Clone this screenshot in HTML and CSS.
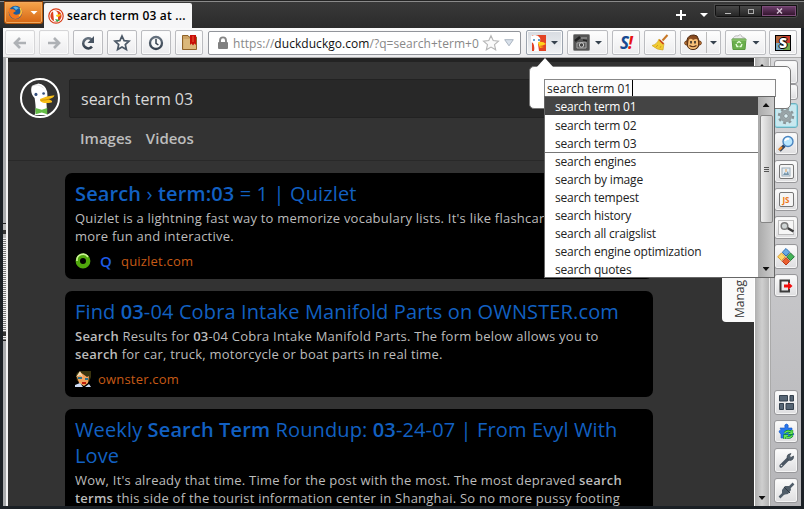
FILE: index.html
```html
<!DOCTYPE html>
<html lang="en">
<head>
<meta charset="utf-8">
<title>search term 03 at DuckDuckGo</title>
<link rel="stylesheet" href="styles.css">
</head>
<body>
<svg width="0" height="0" class="defs">
  <defs>
    <linearGradient id="steel" x1="0" y1="0" x2="0" y2="1"><stop offset="0" stop-color="#65717e"/><stop offset="1" stop-color="#36414e"/></linearGradient>
    <symbol id="duck" viewBox="0 0 40 40">
      <path d="M14 39C16 34 15 27 14 20C9 15 10 9 11 7L18 4Q26 5 28 13Q29 17 27 22L28 39Z" fill="#fff"/>
      <path d="M11 7Q17 3 24 9" fill="none" stroke="#ddd"/>
      <circle cx="15.500" cy="16" r="1.700" fill="#35507e"/><circle cx="24" cy="15" r="1.500" fill="#35507e"/>
      <path d="M20 21Q27 18 36 17Q36 20 29 21.500Q35 23 33 25Q23 27 20 23Z" fill="#f7be16"/>
      <path d="M21 22.500Q27 22.500 31 21" fill="none" stroke="#c68b10"/>
      <path d="M15 31L22 33L28 31V38L22 36L15 38Z" fill="#65bd47"/>
    </symbol>
  </defs>
</svg>
<div class="window">
  <header class="titlebar">
    <div class="fx">
      <svg width="15" height="15" viewBox="0 0 15 15"><circle cx="7.5" cy="7.5" r="6.7" fill="#1c5c9e"/><path d="M5 2Q8 .5 11 3L8 5Z" fill="#58b5e8"/><path d="M1 3Q3 5 5 4L8 6L5 8Q7 11 11 9Q14 7 12 2Q16 8 12 12Q7 16 3 12Q0 9 1 3Z" fill="#f5761d"/><path d="M12 3Q15 8 11 11" fill="none" stroke="#ffd040" stroke-width="1.3"/></svg>
      <i class="tri white"></i>
    </div>
    <div class="tab">
      <svg width="16" height="16" viewBox="0 0 16 16"><circle cx="8" cy="8" r="7.2" fill="#fff" stroke="#d83b16" stroke-width="1.2"/><circle cx="8" cy="8" r="5.6" fill="#de4220"/><path d="M5 3Q9 2 10 6V13H6Z" fill="#fff"/><path d="M8 7Q11 6 13 6Q13 8 10 9Q8 9 8 7" fill="#fcc512"/><path d="M7 11L12 12L9 14Z" fill="#35aa48"/></svg>
      <span>search term 03 at ...</span>
    </div>
    <div class="tabtools"><i class="plus"></i><i class="tri white"></i></div>
    <div class="winbtns"><span class="wb min"><i></i></span><span class="wb max"><i></i></span><span class="wb close"><svg width="7" height="6" viewBox="0 0 7 6"><path d="M1 .5L6 5.5M6 .5L1 5.5" stroke="#d8c5d6" stroke-width="1.4"/></svg></span></div>
  </header>

  <nav class="toolbar">
    <div class="btn w30 dim"><svg width="14" height="14" viewBox="0 0 14 14"><path d="M7 2L2 7L7 12M2.5 7H13" fill="none" stroke="#aeb1b5" stroke-width="2.7"/></svg></div>
    <div class="btn w30 dim"><svg width="14" height="14" viewBox="0 0 14 14"><path d="M7 2L12 7L7 12M11.5 7H1" fill="none" stroke="#aeb1b5" stroke-width="2.7"/></svg></div>
    <div class="btn w30"><svg width="16" height="16" viewBox="0 0 16 16"><path d="M12 11.700A5 5 0 1 1 11.500 4.500" fill="none" stroke="url(#steel)" stroke-width="2.7"/><path d="M14 1V8H7.5Z" fill="#485563"/></svg></div>
    <div class="btn w30"><svg width="18" height="18" viewBox="0 0 18 18"><path d="M9 2L11.1 6.7L16 7.2L12.3 10.5L13.4 15.5L9 12.9L4.6 15.5L5.7 10.5L2 7.2L6.9 6.7Z" fill="#f8f8f8" stroke="#4b5866" stroke-width="1.7"/></svg></div>
    <div class="btn w30"><svg width="16" height="16" viewBox="0 0 16 16"><circle cx="8" cy="8" r="6" fill="#f8f8f8" stroke="url(#steel)" stroke-width="2.3"/><path d="M8 4V8.3L10.4 10" fill="none" stroke="#36414e" stroke-width="1.5"/></svg></div>
    <div class="btn w28 gap5"><svg width="17" height="17" viewBox="0 0 17 17"><path d="M1.5 1.5H7L8 3H15.5V15.5H1.5Z" fill="#cda365" stroke="#8f6229"/><path d="M2.5 5H15V15H2.5Z" fill="#dbb87b"/><path d="M9 1H15V11L13.5 9.5L12 11.5L10.5 9.5L9 11Z" fill="#c80e08"/><path d="M12 2V8" stroke="#ee5c38"/></svg></div>
    <div class="url">
      <svg width="12" height="14" viewBox="0 0 12 14"><path d="M3 7V4.5Q3 1.4 6 1.4T9 4.5V7" fill="none" stroke="#858585" stroke-width="1.9"/><rect x="1" y="6" width="10" height="7" rx="1" fill="#808080"/></svg>
      <span class="addr">https://<b>duckduckgo.com</b>/?q=search+term+0</span>
      <svg class="fav" width="18" height="18" viewBox="0 0 18 18"><path d="M9 1.7L11.2 6.6L16.5 7.1L12.5 10.6L13.7 15.8L9 13.1L4.3 15.8L5.5 10.6L1.5 7.1L6.8 6.6Z" fill="#fafafa" stroke="#b5b5b5" stroke-width="1.1"/></svg>
      <svg width="10" height="8" viewBox="0 0 10 8"><path d="M.7 .7H9.3L5 6.8Z" fill="#d8e0ea" stroke="#aab4c0"/></svg>
    </div>
    <div class="btn w37 active"><svg width="16" height="18" viewBox="0 0 16 18"><rect x="1" y="1" width="14" height="16" fill="#e34324"/><path d="M0 2Q6-1 9 4Q10 8 7 10L8 17H3Q4 12 2 9L0 8Z" fill="#fff"/><path d="M7 8Q12 7 15 10Q12 12 8 12Z" fill="#ffd21c"/><path d="M8 12L13 13L9 14Z" fill="#ffb90b"/><circle cx="3" cy="6" r="1" fill="#3584bd"/><circle cx="8" cy="6" r="1" fill="#3584bd"/></svg><i class="tri"></i></div>
    <div class="btn w41"><svg width="17" height="17" viewBox="0 0 17 17"><rect x=".5" y=".5" width="16" height="16" rx="1" fill="#555" stroke="#858585"/><path d="M2 7L7 3" stroke="#222" stroke-width="2.500"/><path d="M8 4H14M4 9V14H13V8Z" fill="none" stroke="#aaa"/><circle cx="8.500" cy="11" r="2.200" fill="#444" stroke="#ccc"/><path d="M10 6L14 7" stroke="#222" stroke-width="1.500"/></svg><i class="tri"></i></div>
    <div class="btn w28"><span class="s-one">S<em>!</em></span></div>
    <div class="btn w32"><svg width="18" height="18" viewBox="0 0 18 18"><path d="M16.500 1L11.500 6.500" stroke="#c87828" stroke-width="2"/><path d="M8 5L13 9.500L12 16Q6 16 1 11.500Q6 10.500 8 5Z" fill="#f0cb31" stroke="#d0a526" stroke-width=".7"/><path d="M8.500 6L12.500 10" stroke="#c43a22" stroke-width="1.500"/><path d="M7 11L5 13M10 12L9 14" stroke="#d39b22"/></svg></div>
    <div class="btn w41 split"><svg width="18" height="17" viewBox="0 0 18 17"><circle cx="2.7" cy="9" r="2" fill="#d98b46" stroke="#693813"/><circle cx="15.3" cy="9" r="2" fill="#d98b46" stroke="#693813"/><path d="M3 6Q4 1 10 1L13 2Q15 5 15 9Q15 15.5 9 15.5T3 9Z" fill="#8b4c20" stroke="#4b270d"/><path d="M4.500 7Q5 4 8 5L9 6Q14 3 14 8L14 11Q13 15 9 15Q4 15 4 11Z" fill="#f6bf78"/><path d="M7 7V9.500M11 7V9.500" stroke="#222" stroke-width="1.500"/><path d="M5.500 11.500Q9 14 12.500 11.500" fill="none" stroke="#5c3016" stroke-width="1.2"/></svg><i class="tri"></i></div>
    <div class="btn w41 bag"><svg width="16" height="17" viewBox="0 0 16 17"><path d="M2 5Q3 1 7 2Q10-1 11 3Q14 3 14 5Z" fill="#eee" stroke="#bbb"/><path d="M1 5H15L14 15.5H2Z" fill="#6aaf4c" stroke="#5a9a40"/><path d="M1 6H15" stroke="#9ace7c"/><path d="M6 9L8 7.500L10 9M11 10L10 12.500H8.500M5 10L6 12.500H7.500" fill="none" stroke="#e9ffdf" stroke-width="1.4"/></svg><i class="tri"></i></div>
    <div class="btn w28 last"><span class="s-box">S</span></div>
  </nav>

  <div class="body">
    <div class="rail"><i class="grip"></i></div>
    <main class="page">
      <div class="head">
        <div class="logo"><svg width="36" height="36"><use href="#duck"/></svg></div>
        <div class="query">search term 03</div>
      </div>
      <div class="verticals"><span>Images</span><span>Videos</span></div>
      <section class="results">
        <article class="r1">
          <h2><b>Search</b> › <b>term:03</b> = 1 | Quizlet</h2>
          <p class="ln">Quizlet is a lightning fast way to memorize vocabulary lists. It's like flashcards,</p>
          <p class="ln">more fun and interactive.</p>
          <div class="src"><svg width="16" height="16" viewBox="0 0 16 16"><circle cx="8" cy="8" r="5.2" fill="none" stroke="#50a80c" stroke-width="4.4"/><path d="M2 8A6 6 0 0 1 13 4" fill="none" stroke="#caf493" stroke-width="1.6"/></svg><strong>Q</strong><span>quizlet.com</span></div>
        </article>
        <article class="r2">
          <h2>Find <b>03</b>-04 Cobra Intake Manifold Parts on OWNSTER.com</h2>
          <p class="ln"><b>Search</b> Results for <b>03</b>-04 Cobra Intake Manifold Parts. The form below allows you to</p>
          <p class="ln"><b>search</b> for car, truck, motorcycle or boat parts in real time.</p>
          <div class="src own"><svg width="16" height="16" viewBox="0 0 16 16"><path d="M1 5Q1 0 8 0H16V6L14 11L2 10Z" fill="#39340e"/><path d="M2 6L5 1L12 6L14 5L13 12L9 15L4 12Z" fill="#f2a35e"/><path d="M1 6L5 0L8 6L5 4Z" fill="#f5deb5"/><path d="M3 7H7M10 8H13" stroke="#2a718c" stroke-width="2"/><path d="M7 12H11" stroke="#c01d0b" stroke-width="2"/><path d="M0 16V14L5 12L8 16ZM10 16L14 13L16 16" fill="#cfddf5"/></svg><span>ownster.com</span></div>
        </article>
        <article class="r3">
          <h2>Weekly <b>Search Term</b> Roundup: <b>03</b>-24-07 | From Evyl With<br>Love</h2>
          <p class="ln">Wow, It's already that time. Time for the post with the most. The most depraved <b>search</b></p>
          <p class="ln"><b>terms</b> this side of the tourist information center in Shanghai. So no more pussy footing</p>
        </article>
      </section>
      <div class="manage"><span>Manag</span></div>
    </main>
    <div class="pagebar"><span class="arr up"></span><span class="arr down"></span></div>
    <aside class="side">
      <div class="sb h24"></div>
      <div class="sb h16"></div>
      <div class="sb gear"><svg width="18" height="18" viewBox="0 0 18 18"><circle cx="9" cy="9" r="7" fill="none" stroke="#8a9598" stroke-width="2.4" stroke-dasharray="2.8 2.7"/><circle cx="9" cy="9" r="4.7" fill="#aab5b8" stroke="#97a2a5" stroke-width="3"/><circle cx="9" cy="9" r="2.300" fill="#dceff3" stroke="#7d888b"/></svg></div>
      <div class="sb h23 m4"><svg width="18" height="18" viewBox="0 0 18 18"><path d="M2.500 15.500L7.500 10.500" stroke="#34465f" stroke-width="3.400"/><path d="M2 15L5 12" stroke="#ef8b2a" stroke-width="2.4"/><circle cx="11" cy="6.5" r="5" fill="#b9e7ff" stroke="#4a84c0" stroke-width="1.4"/><path d="M8 6Q9 3 12 4" fill="none" stroke="#fff" stroke-width="2"/></svg></div>
      <div class="sb h23 m5"><i class="tile"><svg width="10" height="10" viewBox="0 0 10 10"><rect x="1" y="1" width="8" height="8" fill="#e3edf4" stroke="#9cacb8"/><path d="M2 8L4 5L5 7L7 4L8 8Z" fill="#7594aa"/><path d="M5 2V5" stroke="#e59b48"/></svg></i></div>
      <div class="sb h23 m5"><i class="tile js">JS</i></div>
      <div class="sb h23 m5"><svg width="18" height="17" viewBox="0 0 18 17"><rect x="1.500" y="1.500" width="15" height="14" fill="#f6f6f6" stroke="#888" stroke-dasharray="1 1"/><path d="M10.500 9L16.500 12.500" stroke="#3b3b3b" stroke-width="2.6"/><circle cx="7.500" cy="7" r="3.300" fill="#cfd5d5" stroke="#7a7a7a" stroke-width="1.5"/></svg></div>
      <div class="sb h25 m5"><svg width="18" height="18" viewBox="0 0 18 18"><path d="M9 .5L12.700 4.200L9 8L5.300 4.200Z" fill="#6aabe4" stroke="#2f6cae"/><path d="M13.500 5L17.300 8.800L13.500 12.600L9.700 8.800Z" fill="#43b457" stroke="#247237"/><path d="M9 9.600L12.700 13.300L9 17L5.300 13.300Z" fill="#ea6030" stroke="#b93717"/><path d="M4.500 5L8.300 8.800L4.500 12.600L.7 8.800Z" fill="#ffd66a" stroke="#d89a2a"/></svg></div>
      <div class="sb h23 m6"><svg width="14" height="14" viewBox="0 0 14 14"><path d="M10 4V1.5H1.5V12.5H10V10" fill="none" stroke="#3c3c3c" stroke-width="2"/><path d="M5 5.5H9V3L13.5 7L9 11V8.5H5Z" fill="#f20b0b"/></svg></div>
      <div class="sb h25 first-low"><svg width="15" height="15" viewBox="0 0 15 15"><path d="M.5 .5H8.5V6H.5ZM11 .5H14.5V6H11ZM.5 8.5H4.5V14.5H.5ZM7 8.5H14.5V14.5H7Z" fill="#566574" stroke="#35414d"/></svg></div>
      <div class="sb h23 m5"><svg width="17" height="17" viewBox="0 0 17 17"><path d="M2 5H7Q6 1 8.500 1Q11 1 10 5H14V9L16 11L13 15H3V11Q1 10 1 8L3 7Z" fill="#2876ed" stroke="#1555bd" stroke-width=".6"/><path d="M6.500 10Q10 6.500 13.500 9.500M14 7V10.500H10.500M14.500 12.500Q10 16.500 7 13M6.500 16V12.500H10" fill="none" stroke="#128a22" stroke-width="2.400"/><path d="M6.500 10Q10 6.500 13.500 9.500M14 7V10.500H10.500M14.500 12.500Q10 16.500 7 13M6.500 16V12.500H10" fill="none" stroke="#6be45a" stroke-width="1.200"/></svg></div>
      <div class="sb h25 m5"><svg width="17" height="17" viewBox="0 0 17 17"><path d="M3 14L10 7" stroke="#4b5663" stroke-width="3.3" stroke-linecap="round"/><path d="M15.500 4Q16 8 12 8.500Q9 8 9 5Q9 2 13 1.500L11.500 4L13 5.500Z" fill="#53606c" stroke="#3d4751" stroke-width=".7"/><circle cx="3.500" cy="13.500" r=".8" fill="#ddd"/></svg></div>
      <div class="sb h25 m5"><svg width="17" height="17" viewBox="0 0 17 17"><path d="M1.500 15.500L15.500 1.500" stroke="#505d69" stroke-width="2.5"/><path d="M4 8L7 4L12 4L13 8L10 12L4 13Z" fill="#505d69"/><path d="M6 5L12 11" stroke="#2f3943"/></svg></div>
    </aside>
  </div>
</div>

<div class="panel">
  <i class="notch"></i>
  <div class="field">search term 01<i class="caret"></i></div>
</div>
<div class="menu">
  <ul>
    <li class="sel">search term 01</li>
    <li class="past">search term 02</li>
    <li class="past rule">search term 03</li>
    <li>search engines</li>
    <li>search by image</li>
    <li>search tempest</li>
    <li>search history</li>
    <li>search all craigslist</li>
    <li>search engine optimization</li>
    <li>search quotes</li>
  </ul>
  <div class="menubar"><span class="arr up"></span><span class="thumb"><i></i></span><span class="arr down"></span></div>
</div>
</body>
</html>
```
FILE: styles.css
```css
* { box-sizing: border-box; }
body { margin: 0; width: 804px; height: 509px; overflow: hidden; background: #16191d; font-family: "Open Sans", sans-serif; }
svg { display: block; flex: none; }
.defs { position: absolute; }
i, em { font-style: normal; }
b { font-weight: 600; }
.window { width: 804px; height: 509px; display: flex; flex-direction: column; border-radius: 4px 4px 0 0; background: #1b2025; }

.titlebar { height: 28px; flex: none; display: flex; padding-left: 4px; background: linear-gradient(#242424 0 1px, #8a8a8a 1px 2px, #393939 2px, #2b2b2b); }
.fx { width: 39px; height: 23px; margin-top: 1px; border: 1px solid #b4570b; border-top-color: #6b3714; border-radius: 0 0 3px 3px; background: linear-gradient(#f6a54c, #d66613); display: flex; align-items: center; gap: 7px; padding-left: 3px; box-shadow: inset 0 0 0 1px #f0a85e; }
.tri { display: block; width: 8px; height: 4px; background: #36424e; clip-path: polygon(0 0, 100% 0, 50% 100%); flex: none; }
.tri.white { background: #fff; }
.tab { width: 148px; height: 25px; margin: 3px 0 0 1px; background: #f6f6f7; border-radius: 2px 2px 0 0; display: flex; align-items: center; gap: 3px; padding-left: 4px; font-size: 12px; font-weight: 600; letter-spacing: .2px; white-space: nowrap; color: #000; }
.tabtools { display: flex; align-items: center; gap: 14px; margin-left: 484px; padding-top: 2px; height: 28px; }
.plus { width: 10px; height: 10px; background: linear-gradient(#fff, #fff) center / 10px 2px no-repeat, linear-gradient(#fff, #fff) center / 2px 10px no-repeat; }
.winbtns { display: flex; height: 12px; margin: 5px 0 0 7px; border: 1px solid #111; border-radius: 0 0 3px 3px; box-shadow: 0 0 0 1px #4a4a4a; }
.wb { width: 24px; display: flex; align-items: center; justify-content: center; background: linear-gradient(#494949, #262626); border-right: 1px solid #111; }
.wb.max { width: 22px; }
.wb.close { width: 34px; background: linear-gradient(#6a3d69, #35162f); border: 1px solid #7d4d7a; }
.wb.min i { width: 6px; height: 1px; margin-top: 4px; background: #bbb; }
.wb.max i { width: 6px; height: 5px; border: 1px solid #aaa; }

.toolbar { height: 30px; flex: none; display: flex; gap: 4px; margin: 0 3px; padding: 2px 0 0 2px; background: linear-gradient(#fafafa, #ececee); border-bottom: 1px solid #aaa; }
.btn { height: 25px; flex: none; display: flex; align-items: center; justify-content: center; gap: 5px; border: 1px solid #bbbcc0; border-radius: 2px; background: linear-gradient(#fefefe, #ececee); box-shadow: inset 0 0 0 1px #fafafa; }
.btn.dim { border-color: #d6d6d8; }
.w28 { width: 28px; } .w30 { width: 30px; } .w32 { width: 32px; } .w37 { width: 37px; } .w41 { width: 41px; }
.btn.gap5 { margin-right: 1px; }
.btn.last { margin-left: -1px; }
.btn.active { background: linear-gradient(#d8dce2, #f0f2f4); border-color: #9ba3ae; margin-left: 1px; gap: 4px; }
.btn.split { gap: 8px; background: linear-gradient(#bbb, #bbb) 25px 0 / 1px 25px no-repeat, linear-gradient(#fefefe, #ececee); }
.s-one { font: italic 700 17px "Open Sans", sans-serif; color: #174a92; letter-spacing: -1px; }
.s-one em { color: #e71313; font-style: italic; }
.s-box { width: 16px; height: 16px; border: 1px solid #000; background: conic-gradient(#cc3b2c 25%, #74a64b 0 50%, #7cabc8 0 75%, #b1653c 0); color: #fff; font: 800 14px/14px "Open Sans", sans-serif; text-align: center; text-shadow: 1px 0 #000, -1px 0 #000, 0 1px #000, 0 -1px #000; }
.url { width: 313px; height: 24px; margin-top: 1px; flex: none; display: flex; align-items: center; border: 1px solid #92959b; border-radius: 2px; background: #fff; padding-left: 8px; font-size: 12px; color: #888; white-space: nowrap; }
.addr { width: 249px; flex: none; margin-left: 4px; letter-spacing: .05px; }
.url b { color: #111; font-weight: 400; }
.fav { margin-right: 4px; }

.body { height: 448px; flex: none; display: flex; margin: 0 3px; }
.rail { width: 5px; flex: none; padding-top: 165px; background: linear-gradient(90deg, #a9abad 0 3px, #f3f3f3 3px); }
.grip { display: block; width: 3px; height: 118px; border-top: 1px solid #222; border-bottom: 1px solid #222; background: linear-gradient(#333, #333) 0 6px / 3px 4px no-repeat, linear-gradient(#333, #333) 0 108px / 3px 4px no-repeat, linear-gradient(#b5b5b5, #b5b5b5) 0 0 / 3px 14px no-repeat, repeating-linear-gradient(#eee 0 1px, #777 1px 2px); }
.page { width: 746px; flex: none; position: relative; overflow: hidden; background: #333; border-top: 4px solid #232323; }
.head { display: flex; gap: 9px; padding: 16px 0 0 12px; }
.logo { width: 40px; height: 40px; border: 2px solid #fff; border-radius: 50%; overflow: hidden; }
.query { width: 570px; height: 39px; margin-top: 1px; padding-left: 11px; background: #282828; border: 1px solid #222; border-radius: 2px; color: #d8d8d8; font-size: 16px; line-height: 38px; }
.verticals { height: 44px; margin-top: -1px; padding: 11px 0 0 72px; display: flex; gap: 14px; border-bottom: 1px solid #292929; font-size: 15px; font-weight: 600; line-height: 20px; color: #bdbdbd; }
.results { width: 588px; margin-left: 57px; }
article { margin-top: 12px; padding: 8px 0 0 10px; background: #000; border-radius: 7px; color: #bcbcbc; overflow: hidden; white-space: nowrap; }
.r1, .r2 { height: 106px; }
.r3 { height: 120px; }
h2 { margin: 0 0 2px; font-size: 20px; line-height: 26px; font-weight: 400; letter-spacing: .13px; color: #1260c2; }
.ln { margin: 0; font-size: 13px; line-height: 18.4px; letter-spacing: .23px; }
.src { display: flex; align-items: center; gap: 8px; margin-top: 6px; font-size: 13px; line-height: 18px; letter-spacing: .2px; color: #c65a16; }
.src strong { width: 14px; color: #1e5be8; font-size: 15px; font-weight: 600; text-align: center; }
.own { gap: 7px; }
.manage { position: absolute; right: 0; top: 200px; width: 32px; height: 60px; background: #fafafa; border-radius: 0 0 0 4px; }
.manage span { display: block; writing-mode: vertical-rl; transform: rotate(180deg); font-size: 12px; line-height: 16px; color: #333; height: 56px; margin-left: 10px; }
.pagebar { width: 16px; flex: none; display: flex; flex-direction: column; justify-content: space-between; background: linear-gradient(90deg, #fff 0 1px, #aeaeae 1px, #cfcfcf 8px, #b4b4b4 15px, #eee 15px); }
.arr { height: 16px; display: flex; align-items: center; justify-content: center; }
.arr::after { content: ""; width: 7px; height: 4px; background: #111; }
.up::after { clip-path: polygon(50% 0, 100% 100%, 0 100%); }
.down::after { clip-path: polygon(0 0, 100% 0, 50% 100%); }
.side { width: 31px; flex: none; padding: 2px 0 0 4px; background: linear-gradient(90deg, #aaa 0 1px, transparent 1px), linear-gradient(#d8d8da, #b5b5b8); }
.sb { width: 24px; display: flex; align-items: center; justify-content: center; border: 1px solid #98989b; border-radius: 3px; background: linear-gradient(#fcfcfc, #dedee0); box-shadow: inset 0 0 0 1px #f5f5f5; }
.h16 { height: 16px; } .h23 { height: 23px; } .h24 { height: 24px; } .h25 { height: 25px; }
.gear { height: 25px; margin-top: 3px; border-color: #6db0be; background: #c9e8ef; box-shadow: inset 0 0 0 1px #99dbe8; }
.m4 { margin-top: 4px; } .m5 { margin-top: 5px; } .m6 { margin-top: 5px; }
.first-low { margin-top: 93px; }
.tile { width: 15px; height: 15px; display: flex; align-items: center; justify-content: center; border: 1px solid #777; border-radius: 2px; background: #f5f5f5; }
.js { color: #ed7816; font-size: 8px; font-weight: 700; line-height: 13px; }

.panel { position: absolute; left: 529px; top: 66px; width: 262px; height: 43px; padding: 12px 0 0 15px; background: #fff; border: 1px solid #777; border-radius: 5px; }
.notch { position: absolute; left: 6px; top: -9px; width: 18px; height: 10px; background: #fff; clip-path: polygon(50% 0, 100% 100%, 0 100%); }
.field { display: flex; align-items: center; width: 232px; height: 18px; margin-left: -1px; padding-left: 2px; border: 1px solid #888; font-size: 12px; line-height: 15px; color: #222; background: #fcfcfc; white-space: nowrap; }
.caret { width: 1px; height: 16px; margin-left: 1px; background: #000; }
.menu { position: absolute; left: 544px; top: 96px; width: 231px; height: 182px; display: flex; overflow: hidden; background: #fff; border: 1px solid #666; }
.menu ul { width: 213px; margin: 0; padding: 0; list-style: none; font-size: 12px; line-height: 18px; letter-spacing: -.19px; color: #222; }
.menu li { height: 18px; padding-left: 10px; white-space: nowrap; }
.menu .sel { background: #444; color: #fff; line-height: 20px; }
.menu .past { line-height: 21px; }
.menu .rule { height: 20px; border-bottom: 1px solid #777; }
.menubar { width: 16px; display: flex; flex-direction: column; background: linear-gradient(90deg, #aaa, #ccc); }
.thumb { width: 13px; height: 108px; margin: 2px 0 0 2px; border: 1px solid #858585; border-radius: 2px; background: linear-gradient(90deg, #eee, #c4c4c4); display: flex; align-items: center; justify-content: center; }
.thumb i { width: 5px; height: 5px; background: repeating-linear-gradient(#555 0 1px, transparent 1px 2px); }
.menubar .down { margin-top: auto; }
```
